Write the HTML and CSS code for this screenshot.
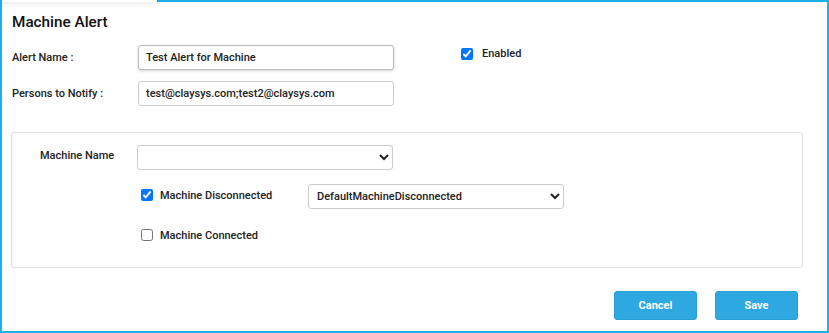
FILE: index.html
```html
<!DOCTYPE html>
<html lang="en">
<head>
    <meta charset="UTF-8">
    <meta name="viewport" content="width=device-width, initial-scale=1.0">
    <title>Machine Alert</title>
    <link rel="stylesheet" href="styles.css">
</head>
<body>
    <div class="frame">
        <div class="top-shadow"></div>
        <h1 class="title">Machine Alert</h1>

        <div class="form-top">
            <label class="label" for="alertName">Alert Name :</label>
            <input type="text" class="field" id="alertName" value="Test Alert for Machine">
            <label class="enabled"><input type="checkbox" checked> Enabled</label>

            <label class="label" for="persons">Persons to Notify :</label>
            <input type="text" class="field" id="persons" value="test@claysys.com;test2@claysys.com">
        </div>

        <div class="panel">
            <div class="panel-row">
                <label class="label panel-label">Machine Name</label>
                <select class="field select"><option></option></select>
            </div>
            <div class="panel-row">
                <span class="panel-label"></span>
                <label class="check check-wide"><input type="checkbox" checked> Machine Disconnected</label>
                <select class="field select">
                    <option>DefaultMachineDisconnected</option>
                </select>
            </div>
            <div class="panel-row">
                <span class="panel-label"></span>
                <label class="check"><input type="checkbox"> Machine Connected</label>
            </div>
        </div>

        <div class="actions">
            <button class="btn">Cancel</button>
            <button class="btn">Save</button>
        </div>
    </div>
</body>
</html>
```

FILE: styles.css
```css
body { margin: 0; font-family: Roboto, "Liberation Sans", sans-serif; color: #222; background: #fff; }
.frame { position: relative; width: 829px; height: 333px; box-sizing: border-box; border: 2px solid #1eb0e6; padding: 9px 24px 0 9px; background: #fff; }
.top-shadow { position: absolute; top: -2px; left: 0; width: 155px; height: 2px; background: #fff; box-shadow: 0 1px 5px rgba(0, 0, 0, 0.18); }
.title { margin: 1px 0 13px 1px; font-size: 15.3px; font-weight: 500; line-height: 20px; color: #111; }

.form-top { display: grid; grid-template-columns: 126px 256px auto; row-gap: 11px; align-items: center; padding-left: 1px; }
.label { font-size: 11px; font-weight: 500; color: #222; }
.field { box-sizing: border-box; width: 256px; height: 25px; border: 1px solid #ccc; border-radius: 3px; padding: 0 7px; font-family: Roboto, "Liberation Sans", sans-serif; font-size: 11px; font-weight: 500; color: #222; background: #fff; outline: none; }
#alertName { border-color: #bbb; box-shadow: 0 1px 3px rgba(0, 0, 0, 0.18); }
.enabled { align-self: start; margin: 2px 0 0 67px; display: flex; align-items: center; gap: 9px; font-size: 11px; font-weight: 500; }
.enabled input { margin: 0; width: 12px; height: 12px; }

.panel { margin: 26px 0 0 0; height: 136px; box-sizing: border-box; border: 1px solid #ddd; border-radius: 3px; padding: 12px 28px 0; display: flex; flex-direction: column; gap: 14px; }
.panel-row { display: flex; align-items: flex-start; min-height: 25px; }
.panel-row + .panel-row + .panel-row { margin-top: 1px; }
.panel-label { width: 97px; flex: none; line-height: 22px; }
.select { padding: 0 4px; }
.check { display: flex; align-items: center; gap: 7px; height: 22px; font-size: 11px; font-weight: 500; }
.check input { margin: 0 0 0 4px; width: 12px; height: 12px; }
.check-wide { width: 171px; flex: none; }

.actions { display: flex; justify-content: flex-end; gap: 18px; margin: 23px 5px 0 0; }
.btn { width: 83px; height: 29px; border: 1px solid #2a9fd6; border-radius: 3px; background: #2ea8e0; color: #fff; font-family: Roboto, "Liberation Sans", sans-serif; font-size: 11px; font-weight: 700; cursor: pointer; }
```
